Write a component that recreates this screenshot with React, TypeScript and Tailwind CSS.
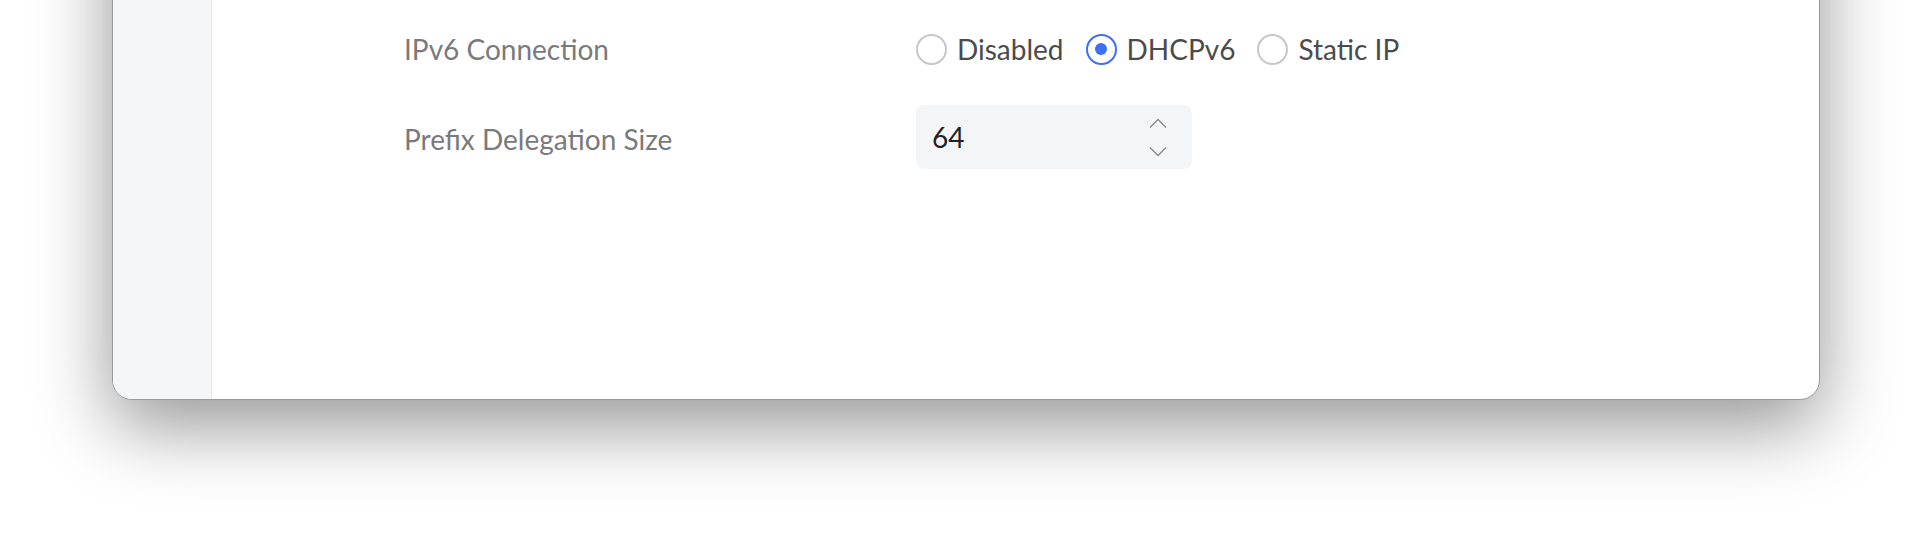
import { useState } from "react";

const options = ["Disabled", "DHCPv6", "Static IP"];

function Radio({
  label,
  checked,
  onSelect,
}: {
  label: string;
  checked: boolean;
  onSelect: () => void;
}) {
  return (
    <button
      type="button"
      onClick={onSelect}
      className="flex items-center gap-[10px] text-[28px] text-[#4b4b4d]"
    >
      <span
        className={
          checked
            ? "size-[31px] rounded-full border-2 border-[#3d6ff3] flex items-center justify-center"
            : "size-[31px] rounded-full border-2 border-[#c5c7cd]"
        }
      >
        {checked && <span className="size-[12px] rounded-full bg-[#3d6ff3]" />}
      </span>
      {label}
    </button>
  );
}

function Stepper({ value }: { value: number }) {
  return (
    <div className="w-[276px] h-[64px] rounded-[8px] bg-[#f4f5f7] flex items-center justify-between pl-[16px] pr-[25px]">
      <span className="text-[28px] text-[#222]">{value}</span>
      <div className="flex flex-col gap-[19px] text-[#8b8b8e]">
        <svg width="18" height="10" viewBox="0 0 18 10" fill="none">
          <path d="M1 9.5L9 1.5L17 9.5" stroke="currentColor" strokeWidth="1.4" />
        </svg>
        <svg width="18" height="10" viewBox="0 0 18 10" fill="none">
          <path d="M1 0.5L9 8.5L17 0.5" stroke="currentColor" strokeWidth="1.4" />
        </svg>
      </div>
    </div>
  );
}

export default function App() {
  const [mode, setMode] = useState("DHCPv6");

  return (
    <div
      className="h-[547px] overflow-hidden bg-white px-[112px]"
      style={{ fontFamily: "Lato, 'Noto Sans', sans-serif" }}
    >
      <div className="-mt-[200px] h-[600px] flex rounded-b-[20px] bg-white border border-[#9a9a9a] shadow-[0_26px_76px_rgba(0,0,0,0.42)] overflow-hidden">
        <div className="w-[99px] bg-[#f5f6f8] border-r border-[#e7e8eb]" />
        <div className="flex-1 pt-[216px] pl-[192px] flex flex-col gap-[24px]">
          <div className="flex items-center h-[64px]">
            <div className="w-[512px] text-[28px] text-[#7a7a7c]">
              IPv6 Connection
            </div>
            <div className="flex items-center gap-[22px]">
              {options.map((o) => (
                <Radio
                  key={o}
                  label={o}
                  checked={mode === o}
                  onSelect={() => setMode(o)}
                />
              ))}
            </div>
          </div>
          <div className="flex items-center h-[64px]">
            <div className="w-[512px] text-[28px] text-[#7a7a7c] pt-[4px]">
              Prefix Delegation Size
            </div>
            <Stepper value={64} />
          </div>
        </div>
      </div>
    </div>
  );
}
